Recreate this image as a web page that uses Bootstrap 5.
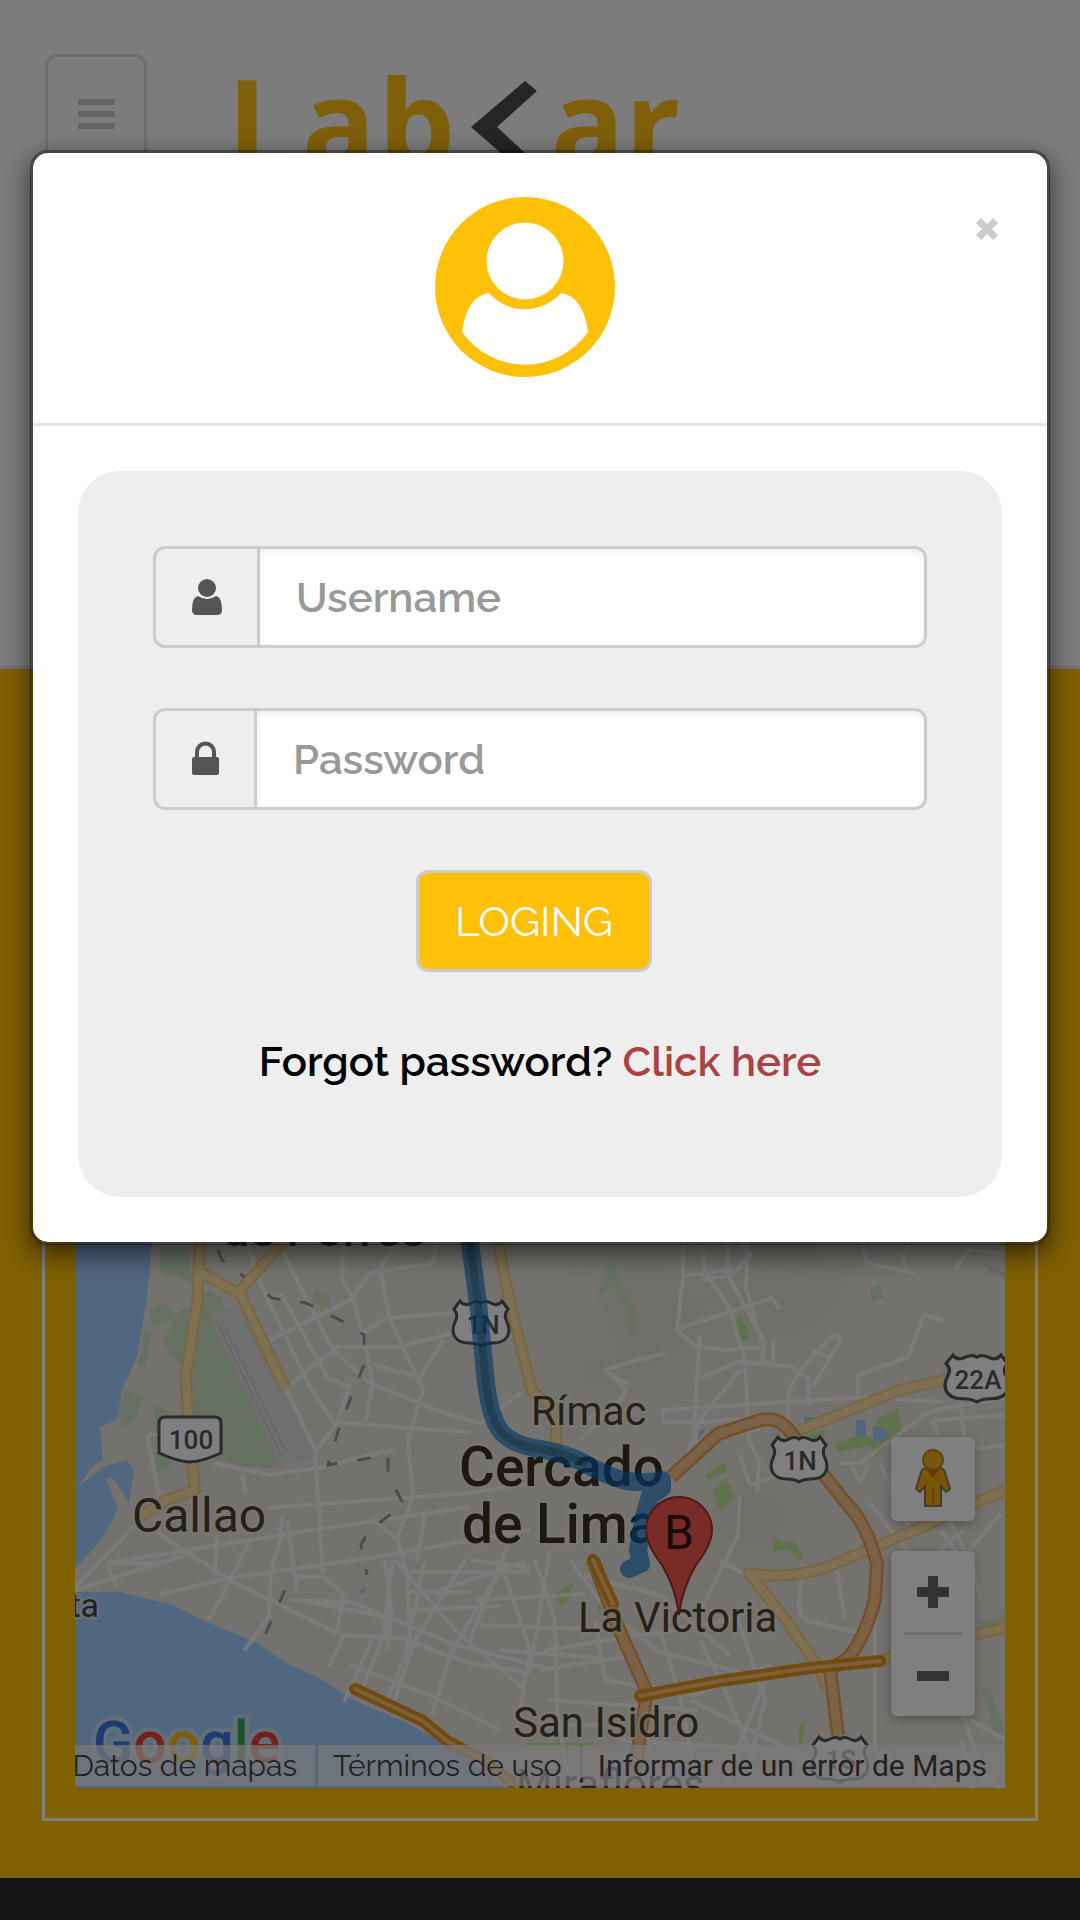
<!DOCTYPE html>
<html lang="es">
<head>
<meta charset="utf-8">
<meta name="viewport" content="width=device-width, initial-scale=1">
<title>LabCar</title>
<link href="https://cdn.jsdelivr.net/npm/bootstrap@5.3.0/dist/css/bootstrap.min.css" rel="stylesheet">
<style>
  body { font-family: Raleway, Lato, sans-serif; font-size: 42px; line-height: 60px; color: #000; background: #ffc107; }
  .site-header { height: 669px; background: #f8f8f8; border-bottom: 3px solid #e7e7e7; padding: 54px 45px; gap: 72px; }
  .menu-toggle { width: 102px; height: 120px; border: 3px solid #ddd; border-radius: 12px; background: none; gap: 6px; }
  .menu-toggle span { width: 37px; height: 6px; border-radius: 1px; background: #cacaca; }
  .brand-logo { width: 480px; height: 130px; }
  .map-section { padding: 42px 42px 57px; }
  .map-frame { border: 3px solid #fff; padding: 30px; }
  .map-view { height: 1044px; font-family: Roboto, sans-serif; }
  .map-controls { right: 30px; bottom: 72px; gap: 30px; }
  .map-button { width: 84px; height: 81px; border: 0; background: #fff; padding: 0; }
  .map-panel { background: #fff; border-radius: 6px; box-shadow: 0 3px 12px rgba(0,0,0,.3); overflow: hidden; }
  .map-panel hr { margin: 0 13px; border-top: 3px solid #e0e0e0; opacity: 1; }
  .map-panel.street { padding: 0 0 3px; }
  .map-terms { gap: 3px; bottom: 2px; font-size: 30px; line-height: 41px; }
  .map-terms a { padding: 0 18px 0 15px; background: rgba(245,245,245,.7); color: #444; white-space: nowrap; text-decoration: none; }
  .map-terms .in-page { font-family: Raleway, Lato, sans-serif; font-weight: 400; }
  .site-footer { min-height: 42px; background: #2a2a2a; }
  .login-dialog { max-width: none; margin: 150px 30px 30px; }
  .login-dialog .modal-content { border: 3px solid rgba(0,0,0,.4); border-radius: 18px; background-clip: padding-box; box-shadow: 0 9px 27px rgba(0,0,0,.6); color: #000; }
  .login-dialog .modal-header { padding: 44px 45px 46px; border-bottom: 3px solid #e5e5e5; }
  .login-dialog .modal-body { padding: 45px; }
  .avatar { width: 180px; height: 180px; }
  .dismiss { width: 30px; height: 63px; border: 0; padding: 0; background: none; }
  .login-panel { background: #eee; border-radius: 42px; padding: 75px 75px 105px; }
  .login-panel .input-group { height: 102px; margin-bottom: 60px; }
  .login-panel .input-group-text { padding: 0 36px; background: #eee; border: 3px solid #ccc; border-right: 0; border-radius: 12px; }
  .login-panel .input-group > .form-control { margin-left: 0; border: 3px solid #ccc; border-radius: 0 12px 12px 0; padding: 0 36px; font-size: 42px; font-weight: 600; box-shadow: inset 0 3px 6px rgba(0,0,0,.075); }
  .login-panel .form-control::placeholder { color: #999; }
  .btn-login { height: 102px; padding: 0 36px; margin-right: 12px; margin-bottom: 60px; font-size: 42px; color: #fff; background: #ffc107; border: 3px solid #ccc; border-radius: 12px; }
  .btn-login:hover { color: #fff; background: #eeb200; }
  .recover { font-weight: 600; }
  .recover a { color: #a94442; text-decoration: none; }
</style>
<script src="https://cdn.jsdelivr.net/npm/bootstrap@5.3.0/dist/js/bootstrap.bundle.min.js"></script>
</head>
<body class="modal-open min-vh-100 d-flex flex-column">

<header class="site-header d-flex align-items-start">
  <button class="menu-toggle d-flex flex-column align-items-center justify-content-center flex-shrink-0" type="button" aria-label="Menu"><span></span><span></span><span></span></button>
  <a href="#" aria-label="LabCar">
    <svg class="brand-logo d-block" viewBox="219 54 480 130">
      <g fill="#ffbe14" font-family="Open Sans, sans-serif" font-weight="700" font-size="122">
        <text x="227 302 378" y="168">Lab</text><text x="551 625" y="168">ar</text>
      </g>
      <path d="M525 81l12 10-40 36 40 37-12 10-54-47z" fill="#4a4a4a"/>
    </svg>
  </a>
</header>

<main class="map-section">
  <div class="map-frame">
    <div class="map-view position-relative overflow-hidden">
      <svg class="w-100 h-100 d-block" viewBox="75 744 930 1044" preserveAspectRatio="xMidYMax slice" role="img" aria-label="Mapa de Lima">
        <defs>
          <g id="shield"><path d="M7 2q4 6 11 2 6-3 10 0 4-3 10 0 7 4 11-2l6 8q-5 6-1 13 4 9 0 15-4 6-14 6-7 0-12 3-5-3-12-3-10 0-14-6-4-6 0-15 4-7-1-13z" fill="#fff" stroke="#555" stroke-width="3"/></g>
          <filter id="haze" x="-20%" y="-20%" width="140%" height="140%"><feGaussianBlur stdDeviation="14"/></filter>
        </defs>
        <path fill="#e9e5dc" d="M75 744h930v1044H75z"/>
        <g fill="#dddad0" filter="url(#haze)" opacity=".8">
          <path d="M590 1290l60-40 60 60-30 50-50 20zM700 1290l60-50 110 20-40 60-60 30zM562 1370l30-30 30 40-20 20zM700 1520l60-40 40 40-50 40z"/>
        </g>
        <!-- parks and green areas -->
        <g fill="#cce1c3">
          <path d="M160 1247l28 0 4 36-32-12zM204 1290l16 6 72 160-22 12-20-1-40-9-32 0-16-4 2-30 12 0 12-16-3-50 8-50zM180 1310l12-4-8 64-22-28zM150 1308l16-5 12 14-26 10zM144 1328l8 4-6 34-8 0zM125 1390l16 5-4 24-14 8-5-13zM154 1405l30 12v22h-28zM154 1452h18l-2 16-14 4zM314 1290l16 6-2 12-16-6z"/>
          <path d="M611 1260l20 40 8 36-8-2-6-26-14-20-14 10zM870 1288l10-4 4 14-12 4zM982 1262l24 10v6l-18-6zM982 1690l6-5 16 44-10 4zM980 1622l26-8v8l-24 6z"/>
        </g>
        <g fill="#bfe496">
          <path d="M732 1322l9-6 10 20-8 6zM705 1475l20-13 2 10-18 8zM712 1490l14-12 9 20-15 12zM775 1540l20 2 9 16-6 2-10-10-16 2zM878 1418l20-10 4 22-25 26-8-10-30 6-4-8 26-10 12 4zM556 1593l18-12-8 22-8 2zM598 1602l8-2 2 8-10 4zM800 1725l6-5-4 24h-4zM526 1743h68v5h-68z"/>
          <path d="M809 1434l14-4 2 8-12 6z"/>
        </g>
        <path fill="#dedede" d="M209 1316l14-5 14-8 78 148-4 9-30 3z"/>
        <path fill="none" stroke="#cfcfcf" stroke-width="2" d="M221 1319l65 132M216 1320l65 135"/>
        <!-- ocean and lakes -->
        <g fill="#a3ccff">
          <path d="M75 744h95l-18 499-5 54-10 60-15 33-5 30-17 7 3 33-12 8-12 18 26-20 22-6 7 10-5 33-15-24-8-1 8 22 4 6-5 13-13 22-25 28z"/>
          <path d="M75 1592l45 0 53 13 34 17 50 21 30 20 36 17 30 20 54 23 50 27 48 38H75z"/>
          <path d="M804 1417h20v8l-20 6zM856 1420h10v17h-10zM873 1425l16 8-6 9-10 0zM699 1432l7-4-8 12zM358 1592l8-6-2 8z"/>
        </g>
        <!-- streets -->
        <g fill="none" stroke="#fff" stroke-width="4" stroke-linejoin="round" opacity=".7">
          <path d="M248 1243l9 34 53 110 23 35 77 6 60 4M278 1243l55 107 37 33 73 30 38 10 40-30M283 1297l44 80 20 10M270 1340l80-40 20-27 63-10 4-20M343 1243l-1 37 11 17 10 40 10 46-8 39M395 1243l-15 27 10 50 33 70-15 50 5 57-16 40 10 36 3 67M287 1387l50-40h60l70-17M363 1333l24-15 66-5M373 1365l47 12 23-37M287 1390l28 60 8 123M317 1450l20-27 13-40M213 1463l57 12 53-8 70-17M242 1475l4 18M270 1300l14-6"/>
          <path d="M267 1508l203-15 60-10M107 1563l206-33 157-23M160 1594l70-16 140-20 160-28M107 1563l60 0M147 1435l12 60M148 1435h14M158 1533l72 47 107 53M135 1525l-60 62M75 1590l110-35M107 1565l10 22M217 1535l-2 40M250 1540l-30 60-12 20M283 1515l-4 30-8 25-2 45M287 1520l10 70M270 1615l-26 36M374 1520l24 20M425 1513l-8 50M385 1560l6 50-4 40M343 1637l-14 30M372 1640l-28 62M392 1560l-8 75-22 54M424 1563l-18 90-20 50M465 1560l-50 80-24 70M500 1570l-50 85-18 60M323 1577l20 16-6 40M340 1635l60 3 70 25 60 10M297 1577h26M290 1600l60 2 30 12M300 1600l90 18 60 25 95 25M350 1665l80 30 70 35M410 1572h120M410 1592h60M410 1610l90-4M395 1560l60 70 70 60M500 1560l30 90-10 60M440 1590l85-28"/>
          <path d="M535 1560l20 60 2 90 12 75M595 1620l10 60 90 15 75-30M545 1650l130-20 60-12M540 1670l90-14M570 1560l36 50 54 42 80 20M620 1640l24 60 10 80M660 1630l20 66 15 80M700 1640l25 50 25 60M735 1610l30 90-15 60M770 1670l-25 60-20 55M650 1700l-20 60-25 22M690 1700l120 60M620 1740l160 10 70 35M548 1700l150 10M542 1725h60M580 1575l80 20 70 60M740 1495l-2 40-40 80M875 1600v150l60 36M845 1620l-8-50M802 1580q-10 40 10 42l53 12M720 1562l30 14M470 1560l60 8M475 1600l110-6M480 1625l100 4M500 1650l100 8M510 1540l-40 100M550 1550l-20 120"/>
          <path d="M683 1243v35l-6 52 18 16 30 4 38-3M701 1243l4 28 26 40 14 50 4 80 10 20-2 30M727 1243v30l38 70-4 20h12v-24M748 1243l-2 45 16 54M683 1276l60-8M680 1328l62-20 30-10 8 12M740 1243l10 12-18 20-30 5M700 1335l-6 95 5 18M700 1378l38-16 52 4 18 12v28M740 1370l-40 50-18 50M787 1440l2-50q8-20 44-54 8-2 6 8l-26 42M812 1350l18 8M858 1395v-20l50-18 16-42 20 6M663 1410l200-13 80 5M663 1410v12h40l80-6M700 1443l60-14M630 1385l-25-15 15-5 45-12M606 1370l20 20-10 20-34 10M620 1400l-40 40M740 1455l10 30 60-20"/>
          <path d="M863 1243l4 20 50 10M908 1243l-6 20M955 1270l14-20 40 4M840 1463h20l70-52 80-14M870 1463l-10 18-8-14M880 1463l30 66M905 1440l60 110M932 1420l24 70M935 1420l75-5M960 1400l6 50 44-6M963 1530l-30 26M980 1600l-10-50 30-36M870 1503l70 90M940 1530l30 40v60M962 1740l10 48M970 1720l36 20M955 1660l10 60 20 66M900 1750h60l40 38"/>
        </g>
        <path fill="none" stroke="#999" stroke-width="3" stroke-dasharray="14 20" d="M218 1250l4 10 50 38 34 5 44 22 14 10 0 30-24 60-12 40 60-10 0 20 16 30-35 25-8 15 6 30M285 1590l-20 45-10 12"/>
        <!-- main roads -->
        <g fill="none" stroke-linejoin="round">
          <path stroke="#eecb86" stroke-width="12" d="M200 744v500l-3 60-11 70 2 50 7 66-28 10-30 18M202 1273l36 20 44-50M240 1293l45 95M498 1243l12 60 22 88 24 20v50M800 1430l100-40 70-16M1005 1490l-90 40-90 38q-40 12-76 5l36 46 35 50 8 20M884 1660l24-12 97-20"/>
          <path stroke="#fde0a2" stroke-width="8" d="M200 744v500l-3 60-11 70 2 50 7 66-28 10-30 18M202 1273l36 20 44-50M240 1293l45 95M498 1243l12 60 22 88 24 20v50M800 1430l100-40 70-16M1005 1490l-90 40-90 38q-40 12-76 5l36 46 35 50 8 20M884 1660l24-12 97-20"/>
          <path stroke="#e7a154" stroke-width="14" d="M671 1477l22-20 25-23 42-14q20-4 32 14l15 20 40 50q20 20 30 60l-2 35q-10 40-28 60l-17 10 8 66M593 1560l22 60 32 72-14 90"/>
          <path stroke="#f6c58e" stroke-width="9" d="M671 1477l22-20 25-23 42-14q20-4 32 14l15 20 40 50q20 20 30 60l-2 35q-10 40-28 60l-17 10 8 66M593 1560l22 60 32 72-14 90"/>
          <g stroke-linecap="round">
            <path stroke="#e39420" stroke-width="12" d="M593 1560l20 44M640 1696l80-15 90-13 70-7M355 1689l68 32 24 20 35 18 38 30"/>
            <path stroke="#fcc070" stroke-width="4" d="M593 1560l20 44M640 1696l80-15 90-13 70-7M355 1689l68 32 24 20 35 18 38 30"/>
          </g>
        </g>
        <!-- road shields -->
        <g font-size="26" font-weight="500" fill="#555" text-anchor="middle">
          <use href="#shield" x="453" y="1299"/><text x="483" y="1334">1N</text>
          <use href="#shield" x="771" y="1435"/><text x="800" y="1470">1N</text>
          <use href="#shield" x="812" y="1735"/><text x="841" y="1769">1S</text>
          <g transform="translate(945 1353) scale(1.14 1.04)"><use href="#shield"/></g><text x="978" y="1389">22A</text>
          <path d="M165 1417h50q6 0 6 6v30q-20 9-31 9t-31-9v-30q0-6 6-6z" fill="#fff" stroke="#555" stroke-width="3"/><text x="191" y="1449">100</text>
        </g>
        <!-- place names -->
        <g fill="#4a4232" stroke="#f4f1ea" stroke-opacity=".45" stroke-width="5" paint-order="stroke" stroke-linejoin="round">
          <text x="223" y="1246" font-size="47" font-weight="500">de Porres</text>
          <text x="132" y="1532" font-size="48">Callao</text>
          <text x="531" y="1425" font-size="41">Rímac</text>
          <g font-size="55" font-weight="500" fill="#3a3220"><text x="459" y="1486">Cercado</text><text x="462" y="1543">de Lima</text></g>
          <text x="578" y="1632" font-size="42">La Victoria</text>
          <text x="513" y="1737" font-size="42">San Isidro</text>
          <text x="516" y="1799" font-size="42">Miraflores</text>
          <text x="99" y="1617" font-size="34" text-anchor="end">Punta</text>
        </g>
        <text x="93" y="1763" font-size="59" font-weight="500" stroke="#d8e2ec" stroke-opacity=".6" stroke-width="9" paint-order="stroke" stroke-linejoin="round"><tspan fill="#3b78e7">G</tspan><tspan fill="#ea4335">o</tspan><tspan fill="#fbbc05">o</tspan><tspan fill="#3b78e7">g</tspan><tspan fill="#34a853">l</tspan><tspan fill="#ea4335">e</tspan></text>
        <!-- route and destination -->
        <g fill="none" stroke-linejoin="round" stroke-linecap="round">
          <path stroke="#0069cc" stroke-opacity=".62" stroke-width="18" d="M465 1200l5 43 8 60 6 60q4 54 18 70 12 12 38 16 24 4 44 14 20 12 42 18 18 3 36-1v8l-12 8-7 24-5 30 3 14-12 5"/>
          <path stroke="#2d5f74" stroke-opacity=".45" stroke-width="8" d="M465 1200l5 43 8 60 6 60q4 54 18 70 12 12 38 16 24 4 44 14"/>
        </g>
        <path fill="#f0564e" stroke="#a0302c" stroke-width="2" d="M679 1615q-3-26-17-50-16-21-16-35a33 33 0 0 1 66 0q0 14-16 35-14 24-17 50z"/>
        <text x="679" y="1549" font-size="48" fill="#351512" text-anchor="middle">B</text>
      </svg>

      <div class="map-controls position-absolute d-flex flex-column">
        <div class="map-panel street">
          <button class="map-button d-flex align-items-center justify-content-center" type="button" aria-label="Street View">
            <svg width="38" height="60" viewBox="0 0 38 60"><path d="M12 20h14q5 1 6 8l4 13-4 3-5-6v20H11V38l-5 6-4-3 4-13q1-7 6-8z" fill="#f5ac16" stroke="#8a7a58" stroke-width="2"/><circle cx="19" cy="12" r="10" fill="#f5ac16" stroke="#b98a2a" stroke-width="2"/><path d="M12 21h14l-7 9z" fill="#d07514"/><path d="M19 40v18" stroke="#c98410" stroke-width="2"/></svg>
          </button>
        </div>
        <div class="map-panel">
          <button class="map-button d-flex align-items-center justify-content-center" type="button" aria-label="Acercar"><svg width="32" height="32" viewBox="0 0 32 32"><path d="M11 0h10v11h11v10H21v11H11V21H0V11h11z" fill="#666"/></svg></button>
          <hr>
          <button class="map-button d-flex align-items-center justify-content-center" type="button" aria-label="Alejar"><svg width="32" height="32" viewBox="0 0 32 32"><path d="M0 11h32v10H0z" fill="#666"/></svg></button>
        </div>
      </div>
      <nav class="map-terms position-absolute end-0 d-flex">
        <a class="in-page" href="#">Datos de mapas</a><a class="in-page" href="#">Términos de uso</a><a href="#">Informar de un error de Maps</a>
      </nav>
    </div>
  </div>
</main>
<footer class="site-footer flex-grow-1"></footer>

<div class="modal-backdrop show"></div>
<div class="modal show d-block" tabindex="-1" role="dialog" aria-modal="true" aria-label="Login">
  <div class="modal-dialog login-dialog">
    <div class="modal-content">
      <div class="modal-header align-items-start">
        <div class="flex-grow-1 d-flex justify-content-center">
          <svg class="avatar" viewBox="0 0 180 180" aria-hidden="true">
            <circle cx="90" cy="90" r="90" fill="#ffc107"/>
            <circle cx="90" cy="64" r="38.5" fill="#fff"/>
            <path d="M54 96a48 48 0 0 0 72 0q22 3 27 39a77 77 0 0 1-126 0q5-36 27-39z" fill="#fff"/>
          </svg>
        </div>
        <button class="dismiss d-flex align-items-center justify-content-center" type="button" data-bs-dismiss="modal" aria-label="Close">
          <svg width="24" height="24" viewBox="0 0 24 24"><path d="M6 1l6 6 6-6 5 5-6 6 6 6-5 5-6-6-6 6-5-5 6-6-6-6z" fill="#ccc"/></svg>
        </button>
      </div>
      <div class="modal-body">
        <form class="login-panel text-center">
          <div class="input-group">
            <label class="input-group-text" for="user" aria-label="Username">
              <svg width="30" height="36" viewBox="0 0 30 36"><circle cx="15" cy="9" r="9" fill="#555"/><path d="M6 17q9 6 18 0 6 1 6 14 0 5-5 5H5q-5 0-5-5Q0 18 6 17z" fill="#555"/></svg>
            </label>
            <input class="form-control" id="user" type="text" placeholder="Username">
          </div>
          <div class="input-group">
            <label class="input-group-text" for="pass" aria-label="Password">
              <svg width="27" height="36" viewBox="0 0 27 36"><path d="M5 16v-5a8.500 8.500 0 0 1 17 0v5" fill="none" stroke="#555" stroke-width="4"/><rect y="16" width="27" height="18" rx="2" fill="#555"/></svg>
            </label>
            <input class="form-control" id="pass" type="password" placeholder="Password">
          </div>
          <button class="btn btn-login" type="submit">LOGING</button>
          <p class="recover m-0">Forgot password? <a href="#">Click here</a></p>
        </form>
      </div>
    </div>
  </div>
</div>
</body>
</html>
